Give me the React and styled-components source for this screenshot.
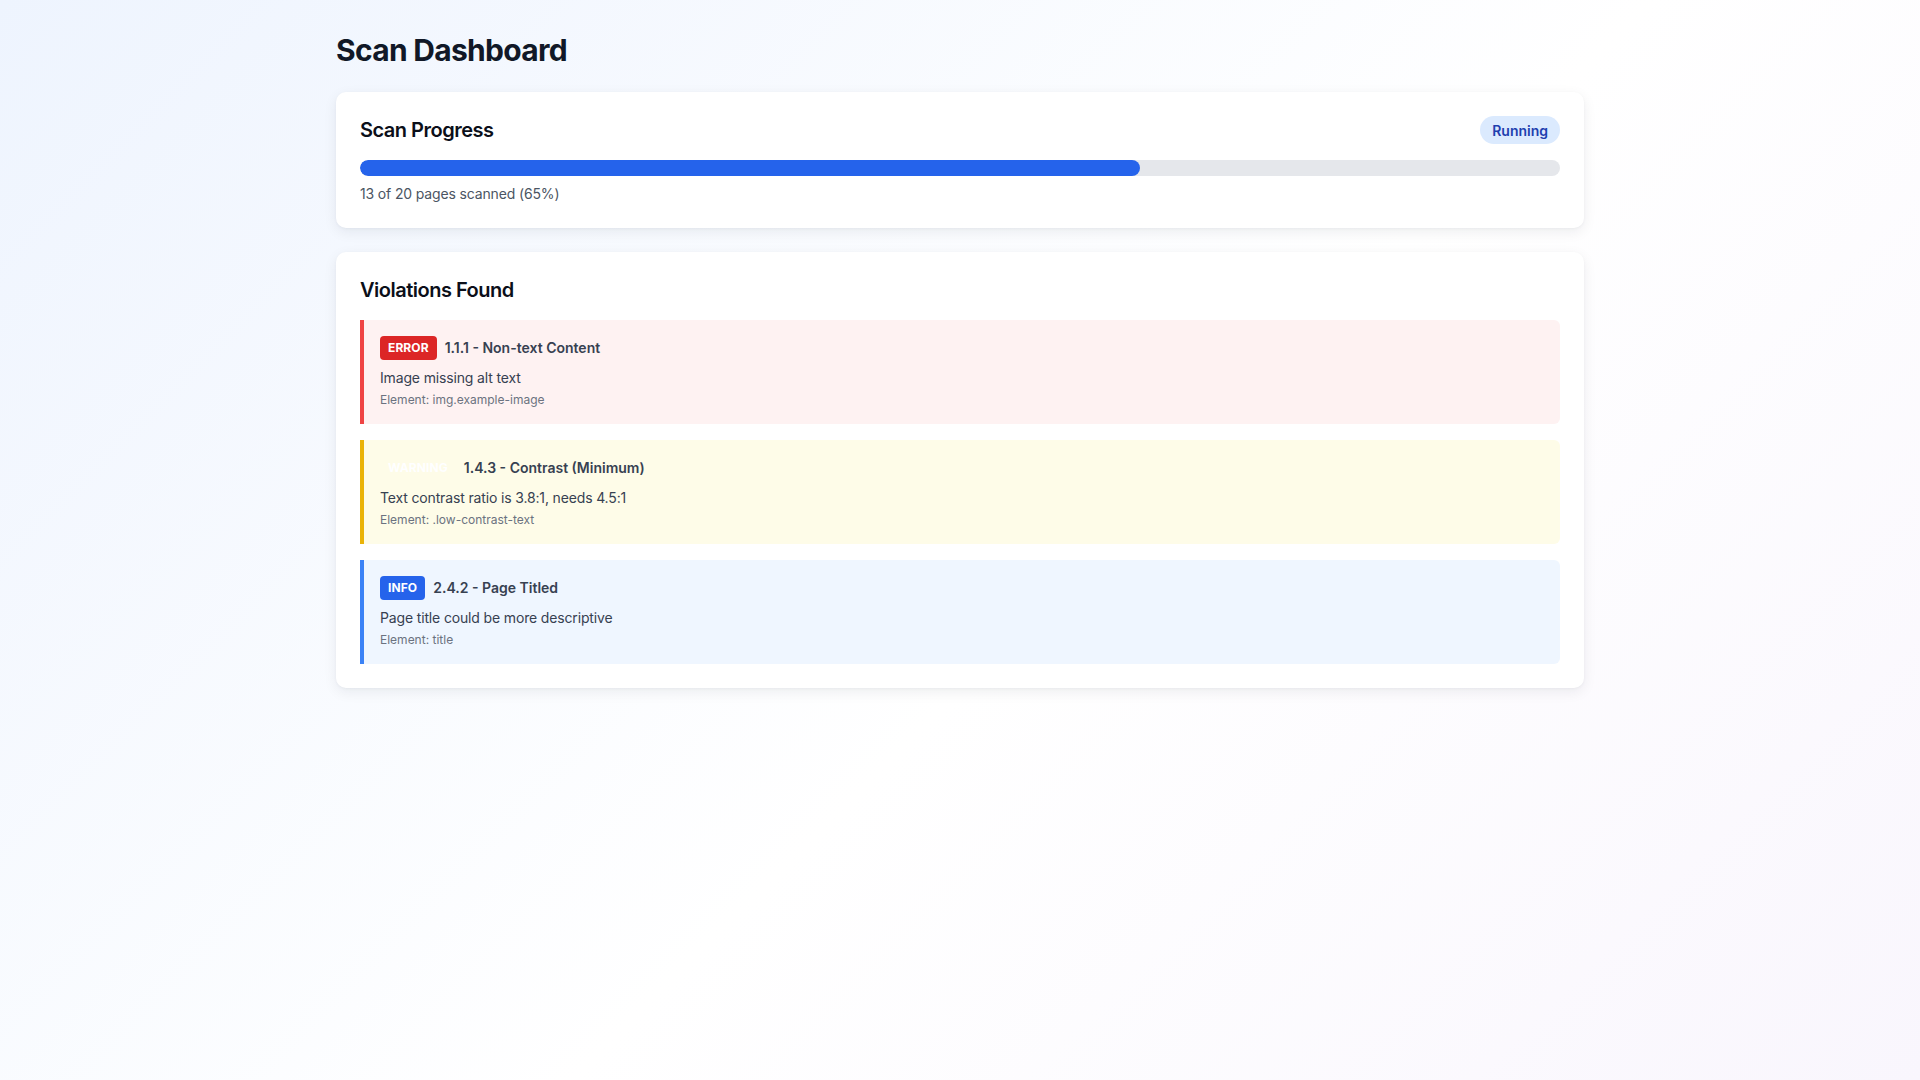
import React from 'react';
import styled, { createGlobalStyle } from 'styled-components';

const GlobalStyle = createGlobalStyle`
  html, body {
    margin: 0;
    padding: 0;
  }

  body {
    min-height: 100vh;
    font-family: Inter, 'Noto Sans', 'Liberation Sans', sans-serif;
    background: linear-gradient(135deg, #eef4fe 0%, #ffffff 55%, #f9f6fd 100%);
    background-attachment: fixed;
    color: #111827;
  }
`;

const PageWrapper = styled.div`
  max-width: 1248px;
  margin: 0 auto;
  padding: 33px 0 32px;
`;

const PageTitle = styled.h1`
  margin: 0 0 24px 0;
  font-size: 30px;
  line-height: 35px;
  font-weight: 700;
  color: #111827;
  letter-spacing: -0.7px;
`;

const Card = styled.section`
  background: #ffffff;
  border-radius: 10px;
  padding: 24px;
  box-shadow: 0 4px 14px rgba(15, 23, 42, 0.07), 0 1px 3px rgba(15, 23, 42, 0.04);
  margin-bottom: 24px;
`;

const CardHeader = styled.div`
  display: flex;
  align-items: center;
  justify-content: space-between;
  margin-bottom: 16px;
`;

const CardTitle = styled.h2`
  margin: 0;
  font-size: 20px;
  line-height: 28px;
  font-weight: 600;
  color: #0b0f19;
  letter-spacing: -0.5px;
`;

const StatusBadge = styled.span`
  display: inline-flex;
  align-items: center;
  height: 28px;
  padding: 0 12px;
  border-radius: 999px;
  background: #dbeafe;
  color: #1e40af;
  font-size: 14px;
  font-weight: 600;
`;

const ProgressTrack = styled.div`
  height: 16px;
  border-radius: 999px;
  background: #e5e7eb;
  overflow: hidden;
`;

const ProgressFill = styled.div`
  height: 100%;
  border-radius: 999px;
  background: #2563eb;
`;

const ProgressText = styled.p`
  margin: 8px 0 0 0;
  font-size: 14px;
  line-height: 20px;
  color: #4b5563;
  letter-spacing: -0.15px;
`;

const ViolationList = styled.div`
  display: flex;
  flex-direction: column;
  gap: 16px;
  margin-top: 16px;
`;

const tones = {
  error: { bg: '#fef2f2', border: '#ef4444', badge: '#dc2626' },
  warning: { bg: '#fefce8', border: '#eab308', badge: 'transparent' },
  info: { bg: '#eff6ff', border: '#3b82f6', badge: '#2563eb' },
};

const ViolationItem = styled.div`
  background: ${({ tone }) => tones[tone].bg};
  border-left: 4px solid ${({ tone }) => tones[tone].border};
  border-radius: 0 6px 6px 0;
  padding: 16px;
`;

const ViolationHeader = styled.div`
  display: flex;
  align-items: center;
  gap: 8px;
`;

const SeverityBadge = styled.span`
  display: inline-block;
  padding: 4px 8px;
  border-radius: 4px;
  background: ${({ tone }) => tones[tone].badge};
  color: #ffffff;
  font-size: 12px;
  line-height: 16px;
  font-weight: 700;
  letter-spacing: 0.1px;
`;

const ViolationTitle = styled.span`
  font-size: 14px;
  line-height: 20px;
  font-weight: 600;
  color: #374151;
`;

const ViolationDescription = styled.p`
  margin: 8px 0 0 0;
  font-size: 14px;
  line-height: 20px;
  color: #374151;
  letter-spacing: -0.15px;
`;

const ViolationElement = styled.p`
  margin: 4px 0 0 0;
  font-size: 12px;
  line-height: 16px;
  color: #6b7280;
`;

const violations = [
  {
    id: 1,
    tone: 'error',
    label: 'ERROR',
    title: '1.1.1 - Non-text Content',
    description: 'Image missing alt text',
    element: 'img.example-image',
  },
  {
    id: 2,
    tone: 'warning',
    label: 'WARNING',
    title: '1.4.3 - Contrast (Minimum)',
    description: 'Text contrast ratio is 3.8:1, needs 4.5:1',
    element: '.low-contrast-text',
  },
  {
    id: 3,
    tone: 'info',
    label: 'INFO',
    title: '2.4.2 - Page Titled',
    description: 'Page title could be more descriptive',
    element: 'title',
  },
];

const scanned = 13;
const total = 20;

const App = () => {
  const percent = Math.round((scanned / total) * 100);

  return (
    <>
      <GlobalStyle />
      <PageWrapper>
        <PageTitle>Scan Dashboard</PageTitle>

        <Card>
          <CardHeader>
            <CardTitle>Scan Progress</CardTitle>
            <StatusBadge>Running</StatusBadge>
          </CardHeader>
          <ProgressTrack>
            <ProgressFill style={{ width: `${percent}%` }} />
          </ProgressTrack>
          <ProgressText>
            {scanned} of {total} pages scanned ({percent}%)
          </ProgressText>
        </Card>

        <Card>
          <CardTitle>Violations Found</CardTitle>
          <ViolationList>
            {violations.map((v) => (
              <ViolationItem key={v.id} tone={v.tone}>
                <ViolationHeader>
                  <SeverityBadge tone={v.tone}>{v.label}</SeverityBadge>
                  <ViolationTitle>{v.title}</ViolationTitle>
                </ViolationHeader>
                <ViolationDescription>{v.description}</ViolationDescription>
                <ViolationElement>Element: {v.element}</ViolationElement>
              </ViolationItem>
            ))}
          </ViolationList>
        </Card>
      </PageWrapper>
    </>
  );
};

export default App;
